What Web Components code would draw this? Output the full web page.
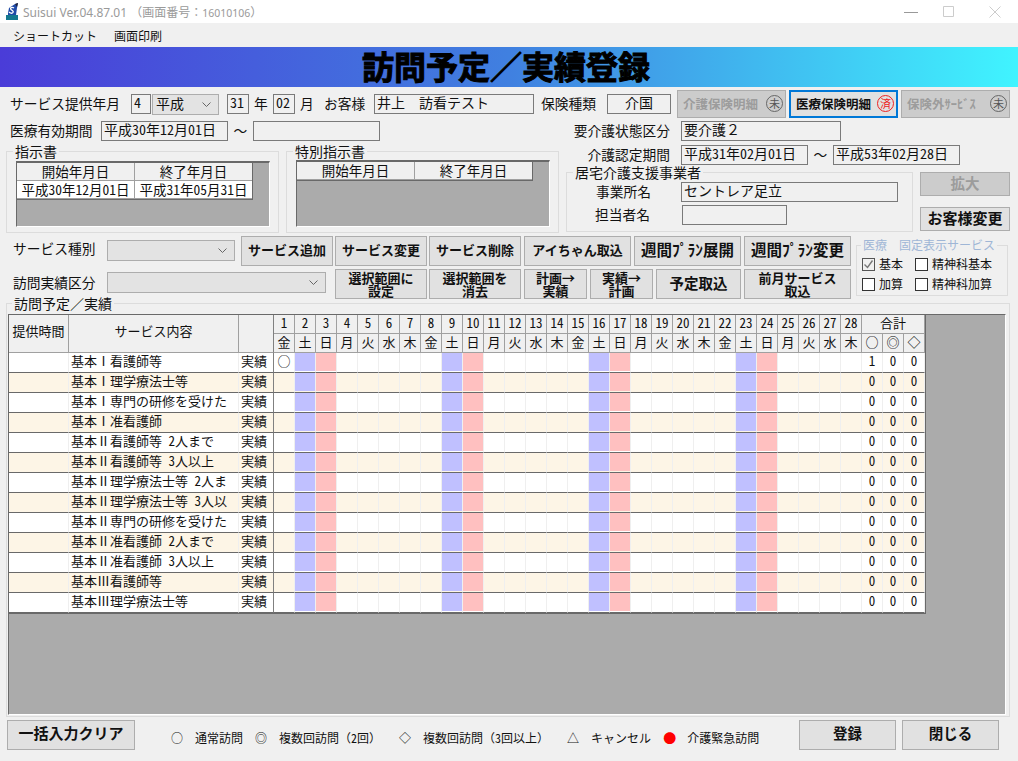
<!DOCTYPE html>
<html lang="ja"><head><meta charset="utf-8"><title>Suisui</title>
<style>
html,body{margin:0;padding:0;background:#f0f0f0}
body{width:1018px;height:761px;overflow:hidden;font-family:"Noto Sans CJK JP","Noto Sans",sans-serif;font-feature-settings:"hwid";color:#111;font-size:14px}
</style></head><body>
<win-title></win-title>
<win-menu></win-menu>
<title-banner>訪問予定／実績登録</title-banner>
<top-form></top-form>
<service-bar></service-bar>
<plan-area></plan-area>
<bottom-bar></bottom-bar>
<script>
function def(name, html){
  customElements.define(name, class extends HTMLElement{
    constructor(){super();this.attachShadow({mode:'open'}).innerHTML=typeof html==='function'?html():html;}
  });
}
def('win-title',`<style>
:host{display:flex;align-items:center;height:23px;background:#fff;color:#9a9a9a;font-size:12px;box-sizing:border-box}
svg{display:block}
.logo{margin:0 5px 0 6px}
.t{flex:1;font-family:"Noto Sans","Noto Sans CJK JP",sans-serif;font-feature-settings:normal;white-space:nowrap}
.n{font-family:"Noto Sans";font-size:10.5px}
.min{margin-right:25px}.max{margin-right:35px}.x{margin-right:17px}
</style>
<svg class="logo" width="12" height="17" viewBox="0 0 12 17"><path d="M0 12h12v5H0z" fill="#14788f"/><path d="M2 10l1-5 6-4 3-1-1 5-1 7H2z" fill="#1f4aa8"/><path d="M9 1l3-1-1 4z" fill="#223"/><path d="M8 5C6 3.500 3.500 5 5 6.500S8 8 7 9.500 4 10 3 9" stroke="#fff" fill="none" stroke-width="1.300"/></svg>
<span class="t">Suisui Ver.04.87.01 （画面番号：<span class="n">16010106</span>）</span>
<svg class="min" width="14" height="10" viewBox="0 0 14 10"><path d="M0 5.500h14" stroke="#999"/></svg>
<svg class="max" width="11" height="11" viewBox="0 0 11 11"><path d="M.5.5h10v10H.5z" fill="none" stroke="#ccc"/></svg>
<svg class="x" width="12" height="12" viewBox="0 0 12 12"><path d="M.5.5l11 11M11.500.5l-11 11" stroke="#ccc"/></svg>`);
def('win-menu',`<style>
:host{display:flex;align-items:center;height:24px;background:#f0f0f0;font-size:12px;padding-left:13px;box-sizing:border-box}
span{margin-right:17px}
</style><span>ショートカット</span><span>画面印刷</span>`);
def('title-banner',`<style>
:host{display:flex;align-items:center;justify-content:center;height:40px;background:linear-gradient(90deg,#4a3cd8 0,#4080e0 50%,#40f4ff 100%);font-size:32px;font-weight:700;color:#000;-webkit-text-stroke:1px #000;line-height:36px;padding:0 6px 4px 0;box-sizing:border-box;font-feature-settings:normal}
</style><slot></slot>`);
def('ui-label',`<style>
:host{display:inline-block;white-space:nowrap;font-size:13.75px;line-height:19px;height:20px;box-sizing:border-box;flex:none}
</style><slot></slot>`);
def('ui-input',`<style>
:host{display:block;height:20px;flex:none;box-sizing:border-box;border:1px solid #7a7a7a;background:#f0f0f0;font-size:14px;line-height:15px;padding:0 2px;white-space:nowrap}
</style><slot></slot>`);
def('ui-select',`<style>
:host{display:flex;align-items:center;justify-content:space-between;height:21px;flex:none;box-sizing:border-box;border:1px solid #adadad;background:#e3e3e3;font-size:14px;line-height:16px;padding:0 7px 0 3px}
span{height:18px}
svg{display:block}
</style><span><slot></slot></span><svg width="9" height="5" viewBox="0 0 9 5"><path d="M.5.5l4 4 4-4" fill="none" stroke="#666"/></svg>`);
customElements.define('ui-button',class extends HTMLElement{
  constructor(){super();
    const s=this.getAttribute('stamp');
    this.attachShadow({mode:'open'}).innerHTML=`<style>
:host{display:flex;align-items:center;justify-content:center;flex:none;height:30px;box-sizing:border-box;border:1px solid #adadad;background:#e1e1e1;font-weight:700;font-size:13px;line-height:13px;text-align:center;white-space:nowrap;color:#111;padding-bottom:3px}
:host([kind=off]){background:#cccccc;color:#9c9c9c}
:host([kind=act]){border:2px solid #0078d7}
:host([stamp]){justify-content:space-between;padding:0 2px 1px 5px}
.st{width:17px;height:17px;border-radius:50%;border:1px solid #666;box-sizing:border-box;color:#555;font-size:11px;font-weight:400;line-height:14px;text-align:center}
:host([kind=act]) .st{border-color:#e22;color:#e22}
</style><span><slot></slot></span>${s?`<span class="st">${s}</span>`:''}`;
  }
});
def('group-box',`<style>
:host{display:block;box-sizing:border-box;flex:none}
fieldset{margin:0;height:100%;box-sizing:border-box;border:1px solid #dcdcdc;padding:var(--pad,0);min-width:0}
legend{padding:0 2px;margin-left:var(--lm,6px);line-height:10px;font-size:var(--lf,14px);color:var(--lc,#111);white-space:nowrap;font-feature-settings:normal}
</style><fieldset><legend><slot name="legend"></slot></legend><slot></slot></fieldset>`);
customElements.define('mini-grid',class extends HTMLElement{
  constructor(){super();
    const rows=JSON.parse(this.getAttribute('rows')||'[]');
    const h=['開始年月日','終了年月日'];
    this.attachShadow({mode:'open'}).innerHTML=`<style>
:host{display:block;box-sizing:border-box;width:254px;background:#ababab;border-top:2px solid #696969;border-left:1px solid #696969;border-bottom:1px solid #fff;border-right:1px solid #fff}
.g{display:inline-grid;grid-template-columns:118px 117px;border-right:1px solid #696969;border-bottom:1px solid #696969;vertical-align:top;font-size:13.5px;line-height:16px;text-align:center}
.g div{height:17px;border-right:1px solid #a0a0a0;border-bottom:1px solid #a0a0a0;white-space:nowrap}
.g div:nth-child(2n){border-right:0}
.h{background:#f0f0f0}.c{background:#fff}
</style><div class="g">${h.map(t=>`<div class="h">${t}</div>`).join('')}${rows.flat().map(t=>`<div class="c">${t}</div>`).join('')}</div>`;
  }
});
def('ui-check',`<style>
:host{display:flex;align-items:center;font-size:12px;line-height:14px;white-space:nowrap;flex:none}
i{display:block;width:13px;height:13px;box-sizing:border-box;border:1px solid #333;background:#fff;margin-right:4px}
:host([checked]) i{border-color:#555;background:#f0f0f0}
svg{display:none}
:host([checked]) svg{display:block}
</style><i><svg width="11" height="11" viewBox="0 0 11 11"><path d="M1.500 5.500l3 3 5-7" fill="none" stroke="#777" stroke-width="1.400"/></svg></i><slot></slot>`);
def('top-form',`<style>
:host{display:block}
.r1{display:flex;align-items:center;height:28px;margin-top:3px;padding-left:10px}
.main{display:flex;margin-top:3px}
.left{width:560px;flex:none}
.row{display:flex;align-items:center;height:20px}
.boxes{display:flex;margin-top:5px;margin-left:6px;gap:7px}
.right{margin-left:6px;flex:none;width:444px}
.rr2{margin-top:4px}
.lower{display:flex}
.side{margin-left:7px;width:90px;padding-top:10px}
.ir{display:flex;align-items:center;height:20px;margin-bottom:3px}
.nf{font-feature-settings:normal}
</style>
<div class="r1">
<ui-label style="width:121px">サービス提供年月</ui-label>
<ui-input style="width:20px">4</ui-input>
<ui-select style="width:67px;margin-left:1px">平成</ui-select>
<ui-input style="width:22px;margin-left:8px">31</ui-input>
<ui-label style="width:14px;margin-left:5px">年</ui-label>
<ui-input style="width:22px;margin-left:5px">02</ui-input>
<ui-label style="width:14px;margin-left:5px">月</ui-label>
<ui-label style="width:50px;margin-left:10px">お客様</ui-label>
<ui-input class="nf" style="width:160px">井上　訪看テスト</ui-input>
<ui-label style="width:66px;margin-left:7px">保険種類</ui-label>
<ui-input style="width:64px;text-align:center">介国</ui-input>
<ui-button kind="off" stamp="未" style="width:109px;height:28px;margin-left:6px;font-size:12.5px">介護保険明細</ui-button>
<ui-button kind="act" stamp="済" style="width:109px;height:28px;margin-left:3px;font-size:12.5px">医療保険明細</ui-button>
<ui-button kind="off" stamp="未" style="width:109px;height:28px;margin-left:3px;font-size:12.5px">保険外ｻｰﾋﾞｽ</ui-button>
</div>
<div class="main">
 <div class="left">
  <div class="row" style="padding-left:10px">
   <ui-label style="width:91px">医療有効期間</ui-label>
   <ui-input style="width:127px">平成30年12月01日</ui-input>
   <ui-label class="nf" style="width:25px;text-align:center">～</ui-label>
   <ui-input style="width:127px"></ui-input>
  </div>
  <div class="boxes">
   <group-box style="width:273px;height:87px;--pad:5px 8px 4px 9px;--lm:-3px"><span slot="legend">指示書</span>
     <mini-grid style="height:66px" rows='[["平成30年12月01日","平成31年05月31日"]]'></mini-grid></group-box>
   <group-box style="width:273px;height:87px;--pad:4px 8px 4px 9px;--lm:-3px"><span slot="legend">特別指示書</span>
     <mini-grid style="height:67px" rows='[]'></mini-grid></group-box>
  </div>
 </div>
 <div class="right">
  <div class="row">
   <ui-label style="width:104px;text-align:right">要介護状態区分</ui-label>
   <ui-input class="nf" style="width:160px;margin-left:11px">要介護２</ui-input>
  </div>
  <div class="row rr2">
   <ui-label style="width:104px;text-align:right">介護認定期間</ui-label>
   <ui-input style="width:127px;margin-left:11px">平成31年02月01日</ui-input>
   <ui-label class="nf" style="width:25px;text-align:center">～</ui-label>
   <ui-input style="width:127px">平成53年02月28日</ui-input>
  </div>
  <div class="lower" style="margin-top:2px">
   <group-box style="width:347px;height:65px;--pad:5px 14px 0 27px;--lm:-21px"><span slot="legend">居宅介護支援事業者</span>
    <div class="ir" style="margin-left:2px"><ui-label style="width:85px">事業所名</ui-label><ui-input style="width:217px">セントレア足立</ui-input></div>
    <div class="ir" style="margin-left:1px"><ui-label style="width:87px">担当者名</ui-label><ui-input style="width:105px"></ui-input></div>
   </group-box>
   <div class="side">
    <ui-button kind="off" style="width:90px;height:24px;margin-top:-5px;font-size:14.5px">拡大</ui-button>
    <ui-button style="width:90px;height:24px;margin-top:11px;font-size:15px">お客様変更</ui-button>
   </div>
  </div>
 </div>
</div>`);
def('service-bar',`<style>
:host{display:flex;margin-top:3px;height:63px}
.col{width:856px;flex:none}
.row{display:flex;height:30px;align-items:flex-start}
.row+.row{margin-top:3px}
.chk{display:grid;grid-template-columns:53px auto;row-gap:6px;padding:0}
.two{padding-bottom:1px}
</style>
<div class="col">
 <div class="row">
  <ui-label style="width:94px;margin-left:13px;margin-top:3px">サービス種別</ui-label>
  <ui-select style="width:128px;margin-top:4px"></ui-select>
  <ui-button style="width:92px;margin-left:6px">サービス追加</ui-button>
  <ui-button style="width:92px;margin-left:2px">サービス変更</ui-button>
  <ui-button style="width:92px;margin-left:2px">サービス削除</ui-button>
  <ui-button style="width:107px;margin-left:3px">アイちゃん取込</ui-button>
  <ui-button style="width:107px;margin-left:3px;font-size:15.5px">週間ﾌﾟﾗﾝ展開</ui-button>
  <ui-button style="width:107px;margin-left:3px;font-size:15.5px">週間ﾌﾟﾗﾝ変更</ui-button>
 </div>
 <div class="row">
  <ui-label style="width:94px;margin-left:13px;margin-top:4px">訪問実績区分</ui-label>
  <ui-select style="width:219px;margin-top:3px"></ui-select>
  <ui-button class="two" style="width:92px;margin-left:9px">選択範囲に<br>設定</ui-button>
  <ui-button class="two" style="width:92px;margin-left:2px">選択範囲を<br>消去</ui-button>
  <ui-button class="two" style="width:63px;margin-left:3px">計画→<br>実績</ui-button>
  <ui-button class="two" style="width:63px;margin-left:3px">実績→<br>計画</ui-button>
  <ui-button style="width:85px;margin-left:3px;font-size:14.5px">予定取込</ui-button>
  <ui-button class="two" style="width:107px;margin-left:3px">前月サービス<br>取込</ui-button>
 </div>
</div>
<group-box style="width:152px;height:56px;margin-top:4px;--pad:7px 0 0 5px;--lc:#9fb6d6;--lf:12px;--lm:-1px"><span slot="legend">医療　固定表示サービス</span>
 <div class="chk">
  <ui-check checked>基本</ui-check><ui-check>精神科基本</ui-check>
  <ui-check>加算</ui-check><ui-check>精神科加算</ui-check>
 </div>
</group-box>`);
customElements.define('visit-grid',class extends HTMLElement{
  constructor(){super();
    const wd='金土日月火水木'.split('');
    const items=['基本Ⅰ看護師等','基本Ⅰ理学療法士等','基本Ⅰ専門の研修を受けた','基本Ⅰ准看護師','基本Ⅱ看護師等 2人まで','基本Ⅱ看護師等 3人以上','基本Ⅱ理学療法士等 2人ま','基本Ⅱ理学療法士等 3人以','基本Ⅱ専門の研修を受けた','基本Ⅱ准看護師 2人まで','基本Ⅱ准看護師 3人以上','基本Ⅲ看護師等','基本Ⅲ理学療法士等'];
    let h='';
    h+=`<div class="hd sp tall">提供時間</div><div class="hd sp tall">サービス内容</div><div class="hd sp tall dk"></div>`;
    for(let d=1;d<=28;d++)h+=`<div class="hd">${d}</div>`;
    h+=`<div class="hd tot">合計</div>`;
    for(let d=0;d<28;d++)h+=`<div class="hd">${wd[d%7]}</div>`;
    for(const m of ['○','◎','◇'])h+=`<div class="hd m">${m}</div>`;
    items.forEach((t,i)=>{
      const z=i%2?' alt':'';
      h+=`<div class="c${z}"></div><div class="c l${z}">${t}</div><div class="c dk l${z}">実績</div>`;
      for(let d=1;d<=28;d++){
        const w=d%7===2?' sat':d%7===3?' sun':'';
        h+=`<div class="c d${z}${w}">${i===0&&d===1?'○':''}</div>`;
      }
      const tot=i===0?[1,0,0]:[0,0,0];
      tot.forEach(v=>h+=`<div class="c${z}">${v}</div>`);
    });
    this.attachShadow({mode:'open'}).innerHTML=`<style>
:host{display:block;box-sizing:border-box;width:998px;height:401px;background:#ababab;border-top:1px solid #696969;border-left:1px solid #696969;border-right:1px solid #fff;border-bottom:1px solid #fff}
.g{display:inline-grid;grid-template-columns:60px 170px 35px repeat(31,21px);grid-template-rows:19px 19px repeat(13,20px);border-right:1px solid #696969;border-bottom:1px solid #696969;font-size:13px;text-align:center;vertical-align:top}
.g>div{box-sizing:border-box;white-space:nowrap}
.hd{background:#f0f0f0;border-right:1px solid #a0a0a0;border-bottom:1px solid #a0a0a0;line-height:16px}
.m{color:#000}
.sp{grid-row:span 2;line-height:32px}
.tot{grid-column:span 3}
.c{background:#fff;border-right:1px solid #efefef;border-bottom:1px solid #696969;line-height:16px}
.alt{background:#fdf5e6}
.l{text-align:left;padding-left:2px}
.dk{border-right:1px solid #808080}
.sat,.sun{background-clip:padding-box}
.sat{background-color:#c0c0ff}.sun{background-color:#ffc0c0}
.d.sat,.d.sun{box-shadow:inset 0 -1px 0 #fff}
.alt.d.sat,.alt.d.sun{box-shadow:inset 0 -1px 0 #fdf5e6}
</style><div class="g">${h}</div>`;
  }
});
def('plan-area',`<style>
:host{display:block;margin-top:-1px;margin-left:6px;width:1004px}
</style>
<group-box style="width:1004px;height:419px;--pad:6px 4px 1px 1px;--lm:4px"><span slot="legend">訪問予定／実績</span><visit-grid></visit-grid></group-box>`);
def('bottom-bar',`<style>
:host{display:flex;margin-top:3px;padding-left:7px;align-items:flex-start}
.key{display:flex;width:628px;margin-left:36px;margin-top:11px;font-size:12px;line-height:14px;white-space:nowrap;flex:none;font-feature-settings:normal}
.m{width:12px;text-align:center;margin-left:12px;display:block}
.s{margin-left:18px}
.t{margin-left:12px}
.f{margin-left:0}
.h{font-feature-settings:"hwid"}
.red{color:#f00;font-size:13px}
</style>
<ui-button style="width:128px;font-size:15px;padding-bottom:5px">一括入力クリア</ui-button>
<div class="key">
<span class="m f">○</span><span class="t">通常訪問</span>
<span class="m">◎</span><span class="t">複数回訪問（<span class="h">2</span>回）</span>
<span class="m s">◇</span><span class="t">複数回訪問（<span class="h">3</span>回以上）</span>
<span class="m s">△</span><span class="t">キャンセル</span>
<span class="m red">●</span><span class="t">介護緊急訪問</span>
</div>
<ui-button style="width:97px;font-size:14.5px;padding-bottom:5px">登録</ui-button>
<ui-button style="width:97px;margin-left:6px;font-size:14.5px;padding-bottom:5px">閉じる</ui-button>`);
</script>
</body></html>
